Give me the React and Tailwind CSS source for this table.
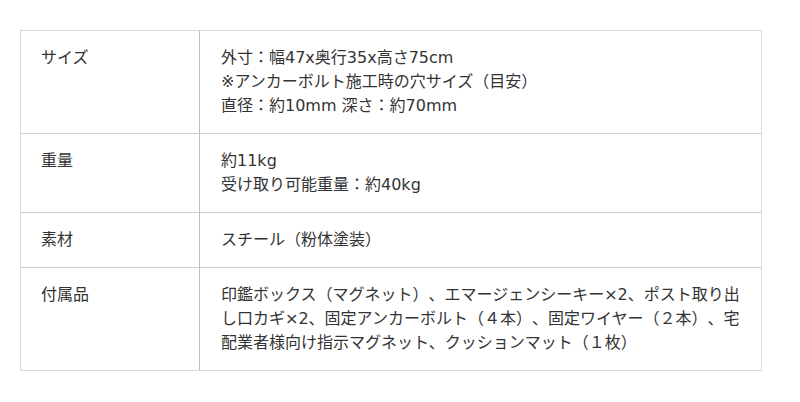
import React from 'react';

const SPECS = [
  {
    label: 'サイズ',
    lines: ['外寸：幅47x奥行35x高さ75cm', '※アンカーボルト施工時の穴サイズ（目安）', '直径：約10mm 深さ：約70mm'],
  },
  { label: '重量', lines: ['約11kg', '受け取り可能重量：約40kg'] },
  { label: '素材', lines: ['スチール（粉体塗装）'] },
  {
    label: '付属品',
    lines: [
      '印鑑ボックス（マグネット）、エマージェンシーキー×2、ポスト取り出し口カギ×2、固定アンカーボルト（４本）、固定ワイヤー（２本）、宅配業者様向け指示マグネット、クッションマット（１枚）',
    ],
  },
];

export default function App() {
  return (
    <div className="w-[800px] h-[402px] bg-white pl-5 pt-[30px] font-['DejaVu_Sans','Noto_Sans_CJK_JP',sans-serif] text-base leading-6 text-[#333] [text-spacing-trim:space-all]">
      <div className="w-[742px] border border-[#d9d9d9]">
        {SPECS.map((row, i) => (
          <div
            key={row.label}
            className={`grid grid-cols-[179px_1fr] ${i > 0 ? 'border-t border-[#cccccc]' : ''}`}
          >
            <div className="border-r border-[#bdbdbd] pl-5 py-[15px]">{row.label}</div>
            <div className="pl-[21px] pr-3 py-[15px]">
              {row.lines.map((line) => (
                <div key={line}>{line}</div>
              ))}
            </div>
          </div>
        ))}
      </div>
    </div>
  );
}
